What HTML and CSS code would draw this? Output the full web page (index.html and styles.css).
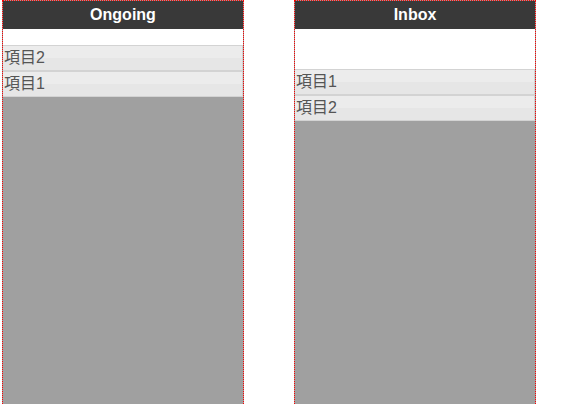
FILE: index.html
```html
<!DOCTYPE html>
<html lang="ja">
<head>
    <meta charset="UTF-8">
    <title>Board</title>
    <link rel="stylesheet" href="styles.css">
</head>
<body>
    <div class="board">
        <div class="column">
            <div class="column-title">Ongoing</div>
            <ul class="task-list ongoing">
                <li class="task">項目2</li>
                <li class="task">項目1</li>
            </ul>
        </div>
        <div class="column">
            <div class="column-title">Inbox</div>
            <ul class="task-list inbox">
                <li class="task">項目1</li>
                <li class="task">項目2</li>
            </ul>
        </div>
    </div>
</body>
</html>
```

FILE: styles.css
```css
html, body {
    margin: 0;
    padding: 0;
    height: 100%;
    overflow: hidden;
    background: #fff;
}

.board {
    display: flex;
    gap: 50px;
    padding-left: 2px;
    height: 100%;
}

.column {
    width: 240px;
    min-height: 420px;
    border: 1px dotted #ff0000;
    background-color: #a0a0a0;
    display: flex;
    flex-direction: column;
}

.column-title {
    height: 28px;
    line-height: 27px;
    background-color: #393939;
    color: #fff;
    font-family: "Liberation Sans", Arial, sans-serif;
    font-weight: bold;
    font-size: 16px;
    text-align: center;
}

.task-list {
    list-style: none;
    margin: 0;
    padding: 16px 0 0 0;
    background-color: #fff;
}

.task-list.inbox {
    padding-top: 40px;
}

.task {
    height: 24px;
    line-height: 24px;
    padding-left: 1px;
    border: 1px solid #d3d3d3;
    border-left: none;
    background: linear-gradient(to bottom, #ececec 0%, #ececec 50%, #e6e6e6 50%, #e6e6e6 100%);
    color: #555;
    font-family: "Liberation Sans", "Noto Sans CJK JP", sans-serif;
    font-size: 16px;
}
```
